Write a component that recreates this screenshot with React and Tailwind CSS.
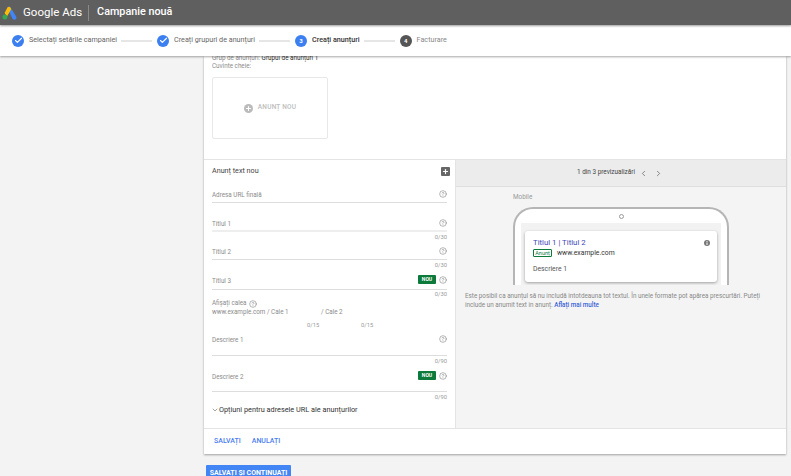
import React from "react";
import { ChevronDown, ChevronLeft, ChevronRight, Check, Plus, HelpCircle } from "lucide-react";

const Step = ({ label, num, state, line }) => {
  return (
    <div className="flex items-center">
      {state === "done" ? (
        <span className="flex h-[12px] w-[12px] items-center justify-center rounded-full bg-[#3b7ff0]">
          <Check size={9} strokeWidth={3} color="#fff" />
        </span>
      ) : (
        <span
          className={
            state === "active"
              ? "flex h-[12px] w-[12px] items-center justify-center rounded-full bg-[#3b7ff0] text-[6px] font-bold text-white"
              : "flex h-[12px] w-[12px] items-center justify-center rounded-full bg-[#555555] text-[6px] font-bold text-white"
          }
        >
          {num}
        </span>
      )}
      <span
        className={
          state === "active"
            ? "ml-[5px] whitespace-nowrap text-[7.2px] font-medium text-[#333333]"
            : state === "todo"
              ? "ml-[5px] whitespace-nowrap text-[7.2px] text-[#888888]"
              : "ml-[5px] whitespace-nowrap text-[7.2px] text-[#666666]"
        }
      >
        {label}
      </span>
      {line && <span className="ml-[4px] mr-[5px] h-[2px] w-[31px] bg-[#e6e6e6]" />}
    </div>
  );
};

const NewBadge = () => (
  <span className="mr-[3px] flex h-[9px] w-[18px] items-center justify-center rounded-[1px] bg-[#0b7a3b] text-[5px] font-bold text-white">
    NOU
  </span>
);

const HelpIcon = () => <HelpCircle size={8} strokeWidth={1.6} color="#777777" />;

const Field = ({ label, badge, boxClass }) => (
  <div className={boxClass}>
    <div className="flex items-center justify-between">
      <span className="text-[6.3px] leading-[9px] text-[#8b8b8b]">{label}</span>
      <span className="mb-[3px] flex items-center">
        {badge && <NewBadge />}
        <HelpIcon />
      </span>
    </div>
  </div>
);

const Counter = ({ text, boxClass }) => (
  <div className={boxClass}>
    <span className="text-[5.8px] leading-[9px] text-[#999999]">{text}</span>
  </div>
);

const LeftPanel = () => (
  <div className="flex w-[252px] flex-col border-r border-[#e4e4e4] px-[8px]">
    <div className="flex h-[23px] items-center justify-between">
      <span className="text-[7.2px] text-[#444444]">Anunț text nou</span>
      <span className="mr-[-3px] flex h-[9px] w-[9px] items-center justify-center rounded-[1px] bg-[#666666]">
        <Plus size={7} strokeWidth={4} color="#fff" />
      </span>
    </div>
    <Field label="Adresa URL finală" boxClass="h-[20px] border-b border-[#dddddd] pt-[7px]" />
    <Field label="Titlul 1" boxClass="h-[29px] border-b-2 border-[#eeeeee] pt-[16px]" />
    <Counter text="0/30" boxClass="flex h-[11px] items-center justify-end" />
    <Field label="Titlul 2" boxClass="h-[17px] border-b border-[#dddddd] pt-[4px]" />
    <Counter text="0/30" boxClass="flex h-[11px] items-center justify-end" />
    <Field label="Titlul 3" badge boxClass="h-[19px] border-b border-[#dddddd] pt-[4px]" />
    <Counter text="0/30" boxClass="flex h-[9px] items-start justify-end" />
    <div className="flex h-[9px] items-center text-[6.3px] text-[#8b8b8b]">
      Afișați calea
      <span className="ml-[3px] flex">
        <HelpIcon />
      </span>
    </div>
    <div className="flex h-[9px] items-center text-[6.3px] text-[#8b8b8b]">
      <span className="w-[109px] whitespace-nowrap">www.example.com / Cale 1</span>
      <span>/ Cale 2</span>
    </div>
    <div className="flex h-[13px] items-end pl-[95px] text-[5.8px] text-[#999999]">
      <span className="w-[54px]">0/15</span>
      <span>0/15</span>
    </div>
    <Field label="Descriere 1" boxClass="h-[26px] border-b border-[#dddddd] pt-[5px]" />
    <Counter text="0/90" boxClass="flex h-[11px] items-center justify-end" />
    <Field label="Descriere 2" badge boxClass="h-[25px] border-b border-[#dddddd] pt-[4px]" />
    <Counter text="0/90" boxClass="flex h-[11px] items-center justify-end" />
    <div className="flex h-[14px] items-center text-[7.3px] text-[#333333]">
      <ChevronDown className="ml-[-1px]" size={8} strokeWidth={1.6} color="#555555" />
      <span className="whitespace-nowrap">Opțiuni pentru adresele URL ale anunțurilor</span>
    </div>
  </div>
);

const RightPanel = () => (
  <div className="flex flex-1 flex-col bg-[#f4f4f4]">
    <div className="flex h-[27px] items-center border-b border-[#dedede] bg-[#ececec] pl-[121px] text-[#444444]">
      <span className="whitespace-nowrap text-[6.4px]">1 din 3 previzualizări</span>
      <ChevronLeft className="ml-[4px]" size={9} strokeWidth={1.6} />
      <ChevronRight className="ml-[6px]" size={9} strokeWidth={1.6} />
    </div>
    <div className="pl-[57px]">
      <div className="flex h-[20px] items-center pt-[2px] text-[6.4px] text-[#999999]">Mobile</div>
      <div className="h-[78px] w-[216px] overflow-hidden rounded-t-[20px] border-x-2 border-t-2 border-[#b5b5b5] bg-white">
        <div className="flex h-[14px] items-center justify-center">
          <span className="h-[5px] w-[5px] rounded-full border border-[#999999]" />
        </div>
        <div className="mx-[6px] h-[70px] bg-[#f2f2f2] px-[4px] pt-[8px]">
          <div className="h-[51px] rounded-[3px] bg-white px-[8px] pt-[6px] shadow-[0_1px_3px_rgba(0,0,0,0.35)]">
            <div className="flex items-center justify-between">
              <span className="text-[7.8px] leading-[12px] text-[#3f46b8]">Titlul 1 | Titlul 2</span>
              <svg className="mr-[-1px]" width="6" height="6" viewBox="0 0 6 6">
                <circle cx="3" cy="3" r="3" fill="#777777" />
                <rect x="2.5" y="2.5" width="1" height="2.4" fill="#ffffff" />
                <rect x="2.5" y="1.1" width="1" height="0.9" fill="#ffffff" />
              </svg>
            </div>
            <div className="flex h-[8px] items-center">
              <span className="flex h-[8px] w-[19px] items-center justify-center rounded-[1px] border border-[#0b7a3b] text-[5.5px] text-[#0b7a3b]">
                Anunț
              </span>
              <span className="ml-[5px] text-[6.8px] text-[#333333]">www.example.com</span>
            </div>
            <div className="mt-[8px] text-[6.8px] leading-[9px] text-[#555555]">Descriere 1</div>
          </div>
        </div>
      </div>
    </div>
    <p className="ml-[9px] mt-[7px] w-[300px] text-[6.3px] leading-[9px] text-[#888888]">
      Este posibil ca anunțul să nu includă întotdeauna tot textul. În unele formate pot apărea prescurtări. Puteți
      include un anumit text în anunț. <span className="font-medium text-[#3b62d8]">Aflați mai multe</span>
    </p>
  </div>
);

export default function App() {
  return (
    <div className="flex h-[476px] w-[791px] flex-col overflow-hidden bg-[#f3f3f3] font-['Roboto',sans-serif]">
      <header className="relative z-20 flex h-[25px] shrink-0 items-center bg-[#5f5f5f] pl-[2px] shadow-[0_1px_2px_rgba(0,0,0,0.4)]">
        <svg width="15" height="14" viewBox="0 0 15 14">
          <path d="M5.2 1.6 L8 0.4 L14.4 11 A2.2 2.2 0 0 1 10.6 13 Z" fill="#4285f4" />
          <path d="M5.4 1.4 A2.2 2.2 0 0 1 9 3.6 L5 10.6 L2.6 7 Z" fill="#fbbc04" />
          <circle cx="2.9" cy="11" r="2.5" fill="#34a853" />
        </svg>
        <span className="ml-[6px] whitespace-nowrap text-[11.5px] text-white">Google Ads</span>
        <span className="ml-[6px] h-[16px] w-px bg-[#8a8a8a]" />
        <span className="ml-[8px] whitespace-nowrap text-[10.8px] font-medium text-white">Campanie nouă</span>
      </header>
      <nav className="relative z-10 flex h-[31px] shrink-0 items-center bg-white pl-[12px] shadow-[0_1px_2px_rgba(0,0,0,0.35)]">
        <Step label="Selectați setările campaniei" state="done" line />
        <Step label="Creați grupuri de anunțuri" state="done" line />
        <Step label="Creați anunțuri" num="3" state="active" line />
        <Step label="Facturare" num="4" state="todo" />
      </nav>
      <main className="ml-[204px] w-[582px] shrink-0">
        <div className="bg-white shadow-[0_1px_2px_rgba(0,0,0,0.35)]">
          <div className="flex h-[104px] flex-col border-b border-[#e4e4e4] px-[8px]">
            <div className="-mt-[2px] text-[6.3px] leading-[8px] text-[#8b8b8b]">
              Grup de anunțuri: <span className="text-[#333333]">Grupul de anunțuri 1</span>
            </div>
            <div className="text-[6.3px] leading-[8px] text-[#8b8b8b]">Cuvinte cheie:</div>
            <div className="mt-[7px] flex h-[62px] w-[116px] items-center justify-center rounded-[2px] border border-[#e8e8e8]">
              <span className="flex h-[9px] w-[9px] items-center justify-center rounded-full bg-[#bbbbbb]">
                <Plus size={7} strokeWidth={3.5} color="#fff" />
              </span>
              <span className="ml-[5px] text-[6.5px] font-medium tracking-[0.2px] text-[#bdbdbd]">ANUNȚ NOU</span>
            </div>
          </div>
          <div className="flex h-[268px]">
            <LeftPanel />
            <RightPanel />
          </div>
          <div className="flex h-[26px] items-center border-t border-[#e4e4e4] pl-[10px] text-[7px] font-medium text-[#4a7df0]">
            <span>SALVAȚI</span>
            <span className="ml-[11px]">ANULAȚI</span>
          </div>
        </div>
        <button className="ml-[2px] mt-[11px] flex h-[22px] w-[85px] items-start justify-center rounded-[1px] bg-[#4285f4] pt-[3px] text-[7px] font-bold text-white">
          SALVAȚI ȘI CONTINUAȚI
        </button>
      </main>
    </div>
  );
}
